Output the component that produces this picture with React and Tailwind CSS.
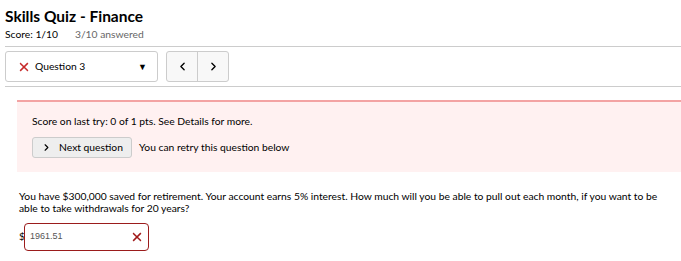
import { ChevronLeft, ChevronRight } from 'lucide-react'

function XMark({ className }) {
  return (
    <svg viewBox="0 0 12 12" className={className} fill="none" stroke="currentColor" strokeWidth="1.8" strokeLinecap="square">
      <path d="M2 2 L10 10 M10 2 L2 10" />
    </svg>
  )
}

export default function App() {
  return (
    <div className="w-[681px] h-[261px] bg-white text-black overflow-hidden font-['Lato',sans-serif]">
      {/* Header */}
      <div className="pl-[5px] pt-[6px]">
        <h1 className="text-[15.5px] font-bold leading-[20px]">Skills Quiz - Finance</h1>
        <div className="text-[10.3px] leading-[14px] mt-[1px] flex gap-[17px]">
          <span>Score: 1/10</span>
          <span className="text-[#666]">3/10 answered</span>
        </div>
      </div>

      {/* Question nav */}
      <div className="ml-[5px] mt-[5px] border-t border-b border-[#ccc] py-[4px] flex items-center gap-[8px]">
        <div className="w-[153px] h-[31px] border border-[#ccc] rounded-[3px] flex items-center pl-[13px] pr-[10px]">
          <XMark className="w-[10px] h-[10px] text-[#c62828]" />
          <span className="ml-[6px] text-[10.3px]">Question 3</span>
          <span className="ml-auto text-[9px] leading-none">▼</span>
        </div>
        <div className="h-[31px] flex border border-[#ccc] rounded-[3px] bg-[#f8f8f8]">
          <button className="w-[31px] flex items-center justify-center border-r border-[#ccc]">
            <ChevronLeft className="w-[13px] h-[13px]" strokeWidth={2.5} />
          </button>
          <button className="w-[30px] flex items-center justify-center">
            <ChevronRight className="w-[13px] h-[13px]" strokeWidth={2.5} />
          </button>
        </div>
      </div>

      {/* Feedback */}
      <div className="ml-[17px] mt-[13px] h-[72px] bg-[#fff1f1] border-t-2 border-[#f3a3a3] pl-[15px] pt-[12px]">
        <p className="text-[10.3px] leading-[14px]">
          Score on last try: 0 of 1 pts. See Details for more.
        </p>
        <div className="mt-[9px] flex items-center gap-[7px]">
          <button className="w-[100px] h-[21px] bg-[#eeeeee] border border-[#ccc] rounded-[3px] flex items-center justify-center gap-[7px] text-[10.3px]">
            <ChevronRight className="w-[11px] h-[11px]" strokeWidth={2.5} />
            Next question
          </button>
          <span className="text-[10.3px]">You can retry this question below</span>
        </div>
      </div>

      {/* Question */}
      <div className="pl-[19px] pt-[18px]">
        <p className="text-[10.3px] leading-[12px] w-[650px]">
          You have $300,000 saved for retirement. Your account earns 5% interest. How much will you be able to pull out each month, if you want to be able to take withdrawals for 20 years?
        </p>
        <div className="mt-[9px] flex items-center">
          <span className="text-[10.3px]">$</span>
          <div className="w-[125px] h-[28px] border border-[#9b1c1c] rounded-[4px] flex items-center pl-[5px] pr-[6px] ml-[-1px]">
            <span className="text-[9px] text-[#555] font-['Liberation_Sans',sans-serif]">1961.51</span>
            <XMark className="ml-auto w-[10px] h-[10px] text-[#a01818]" />
          </div>
        </div>
      </div>
    </div>
  )
}
